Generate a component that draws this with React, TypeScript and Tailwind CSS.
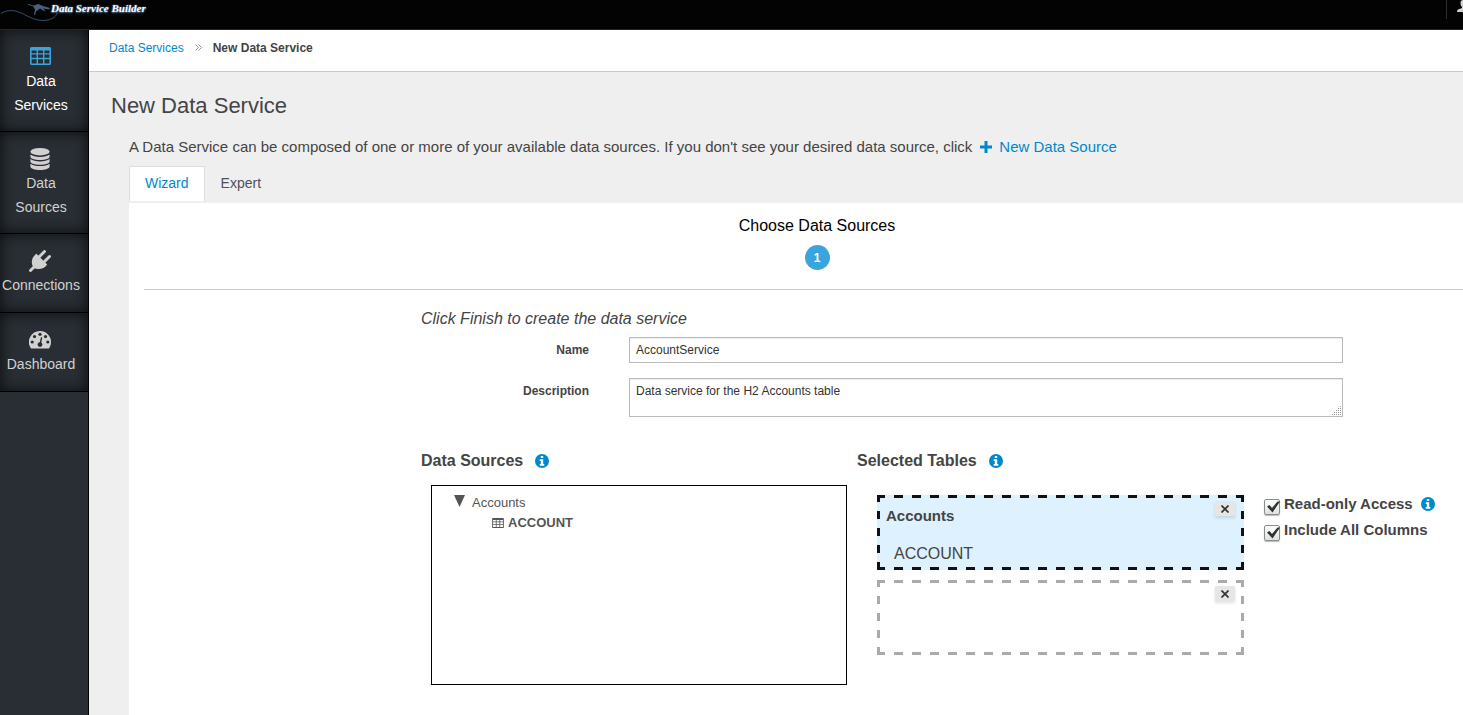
import { useState } from "react";
import type { ReactNode } from "react";

function TableIcon({ className }: { className?: string }) {
  return (
    <svg viewBox="0 0 21 18" className={className} fill="currentColor" fillRule="evenodd">
      <path d="M1.500 0h18A1.500 1.500 0 0 1 21 1.500v15a1.500 1.500 0 0 1-1.500 1.500h-18A1.500 1.500 0 0 1 0 16.500v-15A1.500 1.500 0 0 1 1.500 0zM1.600 3.500v2.700h5V3.500zM8 3.500v2.700h5V3.500zM14.400 3.500v2.700h5V3.500zM1.600 7.600v3.200h5V7.600zM8 7.600v3.200h5V7.600zM14.400 7.600v3.200h5V7.600zM1.600 12.200v4.200h5v-4.200zM8 12.200v4.200h5v-4.200zM14.400 12.200v4.200h5v-4.200z" />
    </svg>
  );
}

function DatabaseIcon() {
  return (
    <svg viewBox="0 0 20 22" className="h-[22px] w-5" fill="currentColor">
      <ellipse cx="10" cy="3.700" rx="9.600" ry="3.700" />
      <path d="M.4 6.500c2 1.700 5.500 2.400 9.600 2.400s7.600-.7 9.600-2.400v2.300c0 1.900-4.300 3.300-9.600 3.300S.4 10.700.4 8.800z" />
      <path d="M.4 11.100c2 1.700 5.500 2.400 9.600 2.400s7.600-.7 9.600-2.400v2.300c0 1.900-4.300 3.300-9.600 3.300S.4 15.300.4 13.400z" />
      <path d="M.4 15.700c2 1.700 5.500 2.400 9.600 2.400s7.600-.7 9.600-2.400V18.400c0 2-4.300 3.600-9.600 3.600S.4 20.400.4 18.400z" />
    </svg>
  );
}

function PlugIcon() {
  return (
    <svg viewBox="0 0 22 22" className="size-[22px]" fill="currentColor">
      <g stroke="currentColor" strokeWidth="2.900" strokeLinecap="round">
        <path d="M1.500 20.500 6 16M10.500 6.500l5-5M15.500 11.500l5-5" />
      </g>
      <path d="m7.500 3.800 10.700 10.700c-3 4.500-9 6-13.400 3.200C1.300 13 2.500 7 7.500 3.800z" />
    </svg>
  );
}

function DashboardIcon() {
  return (
    <svg viewBox="0 0 22 18" className="h-[18px] w-[22px]">
      <path
        d="M11 0a11 11 0 0 1 11 11c0 2.200-.6 4.200-1.700 6-.2.4-.6.600-1 .600H2.700c-.4 0-.8-.2-1-.6A11 11 0 0 1 11 0z"
        fill="currentColor"
      />
      <g className="fill-[#292e34]">
        <circle cx="3.200" cy="11" r="1.600" />
        <circle cx="5.500" cy="5.600" r="1.600" />
        <circle cx="11" cy="3.300" r="1.600" />
        <circle cx="16.500" cy="5.600" r="1.600" />
        <circle cx="18.800" cy="11" r="1.600" />
        <circle cx="11" cy="13.600" r="2.400" />
      </g>
      <path d="m11 13.500 1.500-6.500" className="stroke-[#292e34]" strokeWidth="1.400" strokeLinecap="round" />
    </svg>
  );
}

const navItems = [
  { label: ["Data", "Services"], icon: <TableIcon className="mb-0.5 h-[18px] w-[21px]" />, active: true },
  { label: ["Data", "Sources"], icon: <DatabaseIcon /> },
  { label: ["Connections"], icon: <PlugIcon /> },
  { label: ["Dashboard"], icon: <DashboardIcon /> },
];

function Header() {
  return (
    <header className="flex h-[30px] items-start justify-between border-b border-[#2b2225] bg-[#030303]">
      <div className="flex">
        <svg viewBox="0 0 60 24" className="-mr-[9px] h-6 w-[60px] shrink-0" fill="none">
          <path d="M1 13.500c6-4 13-3.500 19-1s14 8 23 8c9 0 15-5 14-9-1-2-3-3-5-3" stroke="#34506d" />
          <path d="m28 4 6 1.500 4-1.500 5 2 7 2-1 1.500-6-1 3 3-3-1-3-2-4 3-1 3.500-1-.5 1-5-2-3.500-5-1z" fill="#46607d" />
        </svg>
        <span className="font-['Liberation_Serif',serif] text-[11px] leading-4 font-bold text-white italic [text-shadow:0_0_2px_#5d84ad,0_1px_2px_#5d84ad]">
          Data Service Builder
        </span>
      </div>
      <div className="mr-[42px] h-[19px] w-[17px] border-l border-[#2e2e2e] pl-2.5">
        <svg viewBox="0 0 14 12" className="h-3 w-3.5" fill="#d1d1d1">
          <path d="M3.500 2.500C3.500 1 5 0 7 0s3.500 1 3.500 2.500c0 2-.5 3.500-1.500 4.500v1l4 1.500c.7.400 1 1.300 1 2.500H0c0-1.200.3-2.100 1-2.500L5 8V7C4 6 3.500 4.500 3.500 2.500z" />
        </svg>
      </div>
    </header>
  );
}

function Sidebar() {
  return (
    <nav className="w-[89px] shrink-0 border-r border-black bg-[#292e34]">
      {navItems.map((item) => (
        <a
          key={item.label.join(" ")}
          href="#"
          className={`flex min-h-[79px] flex-col items-center border-b border-black pt-[15px] pr-1.5 pb-3.5 text-center text-sm leading-6 shadow-[inset_0_0_14px_#0a0c0e] ${
            item.active ? "text-white" : "text-[#d1d1d1]"
          }`}
        >
          <span className={`flex h-6 items-center pr-0.5 ${item.active ? "text-[#39a5dc]" : ""}`}>{item.icon}</span>
          {item.label.map((line) => (
            <span key={line}>{line}</span>
          ))}
        </a>
      ))}
    </nav>
  );
}

function InfoButton({ label }: { label: string }) {
  return (
    <button type="button" aria-label={label} className="text-[#0088ce]">
      <svg viewBox="0 0 14 14" className="size-3.5">
        <circle cx="7" cy="7" r="7" fill="currentColor" />
        <path d="M5.800 2h2.400v2H5.800zM4.700 5.200h3.500v4.700h1.100v1.800H4.700V9.900h1.100V7H4.700z" fill="#fff" />
      </svg>
    </button>
  );
}

// Long dashes along all four edges, drawn in the card's text colour
const dashedFrame =
  "bg-no-repeat [background-image:repeating-linear-gradient(90deg,currentColor_0_8px,transparent_8px_17px,currentColor_17px_18px),repeating-linear-gradient(90deg,currentColor_0_8px,transparent_8px_17px,currentColor_17px_18px),repeating-linear-gradient(currentColor_0_7px,transparent_7px_16px,currentColor_16px_17px),repeating-linear-gradient(currentColor_0_7px,transparent_7px_16px,currentColor_16px_17px)] [background-size:100%_3px,100%_3px,3px_100%,3px_100%] [background-position:0_0,0_100%,0_0,100%_0]";

function TableCard({ selected, children }: { selected?: boolean; children?: ReactNode }) {
  return (
    <div className={`relative h-[75px] p-[3px] ${dashedFrame} ${selected ? "bg-[#def1ff] text-[#111]" : "text-[#aaa]"}`}>
      <div className="text-[#444]">{children}</div>
      <button
        type="button"
        aria-label="Remove table"
        className="absolute top-1.5 right-[9px] flex h-[15px] w-5 items-center justify-center bg-[#e6e6e6] text-[#333] shadow-[0_2px_3px_rgba(0,0,0,0.12)]"
      >
        <svg viewBox="0 0 8 8" className="size-2" stroke="currentColor" strokeWidth="1.700">
          <path d="m.5.5 7 7m0-7-7 7" />
        </svg>
      </button>
    </div>
  );
}

function CheckOption({ label, children }: { label: string; children?: ReactNode }) {
  const [checked, setChecked] = useState(true);

  return (
    <div className="flex h-[26px] items-center">
      <label className="flex items-center gap-1 text-[15px] font-bold">
        <span className="relative mt-1.5 size-4">
          <input
            type="checkbox"
            checked={checked}
            onChange={() => setChecked(!checked)}
            className="block size-4 appearance-none rounded-xs border border-[#8b8d8b] bg-linear-to-b from-white to-[#e0e0e0] shadow-[0_1px_1px_#bbb]"
          />
          {checked && (
            <svg viewBox="0 0 16 16" className="pointer-events-none absolute inset-0 size-4" fill="#2e3436">
              <path d="M3 7.500 5.500 6 8 9l5.500-6.500H16L8.500 13.500z" />
            </svg>
          )}
        </span>
        {label}
      </label>
      {children}
    </div>
  );
}

function SourcesForm() {
  const [name, setName] = useState("AccountService");
  const [description, setDescription] = useState("Data service for the H2 Accounts table");

  return (
    <form className="pt-[17px] pl-[277px]">
      <p className="text-base leading-6 italic">Click Finish to create the data service</p>
      <div className="mt-1.5 mr-[147px] grid grid-cols-[168px_1fr] gap-x-10 gap-y-[15px] text-xs">
        <label htmlFor="name" className="pt-1 text-right leading-[18px] font-bold">
          Name
        </label>
        <input
          id="name"
          value={name}
          onChange={(e) => setName(e.target.value)}
          className="h-[26px] border border-[#bbb] px-1.5 text-[#333] shadow-[inset_0_1px_1px_rgba(0,0,0,0.075)]"
        />
        <label htmlFor="description" className="pt-1 text-right leading-[18px] font-bold">
          Description
        </label>
        <div className="relative">
          <textarea
            id="description"
            value={description}
            onChange={(e) => setDescription(e.target.value)}
            className="block h-[39px] w-full resize-none border border-[#bbb] px-1.5 py-1 leading-4 text-[#333] shadow-[inset_0_1px_1px_rgba(0,0,0,0.075)]"
          />
          <svg
            viewBox="0 0 10 10"
            className="pointer-events-none absolute right-px bottom-px size-2.5"
            fill="#999"
            shapeRendering="crispEdges"
          >
            <path d="M8 0h1v1H8zM6 2h1v1H6zM8 2h1v1H8zM4 4h1v1H4zM6 4h1v1H6zM8 4h1v1H8zM2 6h1v1H2zM4 6h1v1H4zM6 6h1v1H6zM8 6h1v1H8zM0 8h1v1H0zM2 8h1v1H2zM4 8h1v1H4zM6 8h1v1H6zM8 8h1v1H8z" />
          </svg>
        </div>
      </div>

      <div className="mt-8 grid grid-cols-[436fr_407fr_226fr]">
        <section>
          <h2 className="flex h-6 items-center gap-3 text-base font-bold">
            Data Sources <InfoButton label="About data sources" />
          </h2>
          <div className="mx-2.5 mt-3 h-[200px] border border-black pt-[7px] pl-[22px] text-[13px] leading-5 text-[#555]">
            <div className="flex items-center">
              <button type="button" aria-label="Collapse Accounts" className="mr-[7px] pb-1">
                <svg viewBox="0 0 11 12" className="h-3 w-[11px]" fill="#555">
                  <path d="M0 0h11L5.500 12z" />
                </svg>
              </button>
              Accounts
            </div>
            <div className="flex items-center gap-1 pl-[38px] font-bold">
              <TableIcon className="h-2.5 w-3" />
              ACCOUNT
            </div>
          </div>
        </section>

        <section>
          <h2 className="flex h-6 items-center gap-3 text-base font-bold">
            Selected Tables <InfoButton label="About selected tables" />
          </h2>
          <div className="mx-5 mt-[22px] flex flex-col gap-2.5">
            <TableCard selected>
              <h3 className="px-1.5 pt-2 text-[15px] leading-5 font-bold">Accounts</h3>
              <p className="mt-4 px-3.5 text-base leading-6">ACCOUNT</p>
            </TableCard>
            <TableCard />
          </div>
        </section>

        <section className="pt-[42px]">
          <CheckOption label="Read-only Access">
            <span className="ml-2 flex">
              <InfoButton label="About read-only access" />
            </span>
          </CheckOption>
          <CheckOption label="Include All Columns" />
        </section>
      </div>
    </form>
  );
}

export default function App() {
  const [tab, setTab] = useState("Wizard");

  return (
    <div className="min-h-screen overflow-hidden bg-[#efefef] font-['Liberation_Sans',Arial,sans-serif] text-[#444]">
      <div className="flex min-h-screen w-[calc(100%+42px)] flex-col">
        <Header />
        <div className="flex grow">
          <Sidebar />
          <main className="flex min-w-0 grow flex-col">
            <nav
              aria-label="Breadcrumb"
              className="flex h-[42px] items-center border-b border-[#c8c8c8] bg-white px-5 pb-1.5 text-xs"
            >
              <a href="#" className="text-[#0088ce]">
                Data Services
              </a>
              <svg viewBox="0 0 7 7" className="mx-[11px] size-[7px]" fill="none" stroke="#999">
                <path d="m.5.5 3 3-3 3M3.500.5l3 3-3 3" />
              </svg>
              <span className="font-bold">New Data Service</span>
            </nav>

            <h1 className="mt-5 px-[22px] text-[22px] leading-7">New Data Service</h1>
            <div className="flex grow flex-col pl-10">
              <p className="mt-[15px] flex items-center text-[15px] leading-6">
                A Data Service can be composed of one or more of your available data sources. If you don't see your
                desired data source, click
                <a href="#" className="ml-2 flex items-center gap-[7px] text-[#0088ce]">
                  <svg viewBox="0 0 12 12" className="size-3" stroke="currentColor" strokeWidth="3">
                    <path d="M6 0v12M0 6h12" />
                  </svg>
                  New Data Source
                </a>
              </p>

              <div className="mt-[7px] flex">
                {["Wizard", "Expert"].map((name) => (
                  <button
                    key={name}
                    type="button"
                    onClick={() => setTab(name)}
                    className={`h-[35px] border border-b-0 px-[15px] pb-0.5 text-sm ${
                      tab === name ? "border-[#ddd] bg-white text-[#0088ce]" : "border-transparent text-[#4d5258]"
                    }`}
                  >
                    {name}
                  </button>
                ))}
              </div>

              <div className="mt-0.5 grow bg-white pl-[15px]">
                <div className="mr-[15px] flex flex-col items-center border-b border-[#ccc] pt-[11px] pb-[19px]">
                  <span className="text-base leading-6 text-black">Choose Data Sources</span>
                  <span className="mt-[7px] flex size-[25px] items-center justify-center rounded-full bg-[#39a5dc] text-xs font-bold text-white">
                    1
                  </span>
                </div>
                <div className="mr-[15px]">
                  <SourcesForm />
                </div>
              </div>
            </div>
          </main>
        </div>
      </div>
    </div>
  );
}
